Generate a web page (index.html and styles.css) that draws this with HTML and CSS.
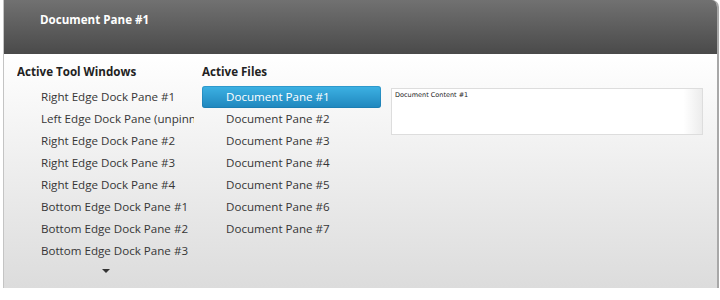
FILE: index.html
```html
<!DOCTYPE html>
<html>
<head>
<meta charset="utf-8">
<link rel="stylesheet" href="styles.css">
</head>
<body>
<div class="window">
  <div class="titlebar"><span class="title">Document Pane #1</span></div>
  <div class="content">
    <div class="col col-tools">
      <div class="heading">Active Tool Windows</div>
      <ul class="list tools">
        <li>Right Edge Dock Pane #1</li>
        <li>Left Edge Dock Pane (unpinned)</li>
        <li>Right Edge Dock Pane #2</li>
        <li>Right Edge Dock Pane #3</li>
        <li>Right Edge Dock Pane #4</li>
        <li>Bottom Edge Dock Pane #1</li>
        <li>Bottom Edge Dock Pane #2</li>
        <li>Bottom Edge Dock Pane #3</li>
      </ul>
      <div class="more"><span class="arrow"></span></div>
    </div>
    <div class="col col-files">
      <div class="heading">Active Files</div>
      <ul class="list files">
        <li class="selected">Document Pane #1</li>
        <li>Document Pane #2</li>
        <li>Document Pane #3</li>
        <li>Document Pane #4</li>
        <li>Document Pane #5</li>
        <li>Document Pane #6</li>
        <li>Document Pane #7</li>
      </ul>
    </div>
    <div class="preview">
      <div class="doc">Document Content #1</div>
    </div>
  </div>
</div>
</body>
</html>
```
FILE: styles.css
```css
html, body {
  margin: 0;
  padding: 0;
  background: #ffffff;
}
body {
  font-family: "Open Sans", "Noto Sans", sans-serif;
  font-size: 11.6px;
  color: #363636;
}
.window {
  margin-left: 3px;
  width: 713px;
  border-left: 1px solid #c4c4c4;
  border-right: 2px solid #a8a8a8;
  border-top-right-radius: 7px;
  overflow: hidden;
}
.titlebar {
  height: 54px;
  background: linear-gradient(#717171, #4a4a4a);
  display: flex;
  align-items: flex-start;
}
.title {
  color: #ffffff;
  font-weight: bold;
  font-size: 11.6px;
  padding: 12px 0 0 36px;
}
.content {
  height: 234px;
  background: linear-gradient(#ffffff, #dcdcdc);
  display: flex;
  padding: 8px 0 0 13px;
  box-sizing: border-box;
}
.col {
  display: flex;
  flex-direction: column;
}
.col-tools {
  width: 177px;
  overflow: hidden;
  margin-right: 8px;
}
.col-files {
  width: 179px;
  margin-right: 10px;
}
.heading {
  font-weight: bold;
  height: 20px;
  line-height: 20px;
  color: #222222;
  white-space: nowrap;
}
.list {
  list-style: none;
  margin: 4px 0 0 0;
  padding: 0;
}
.list li {
  height: 22px;
  line-height: 22px;
  padding-left: 24px;
  white-space: nowrap;
  overflow: hidden;
}
.list li.selected {
  color: #ffffff;
  border-radius: 3px;
  background: linear-gradient(#3db2e4, #1f86bd);
  box-shadow: inset 0 0 0 1px rgba(20, 110, 160, 0.35);
}
.more {
  display: flex;
  justify-content: center;
  padding: 7px 0 0 0;
  width: 177px;
}
.arrow {
  width: 0;
  height: 0;
  border-left: 4px solid transparent;
  border-right: 4px solid transparent;
  border-top: 4px solid #333333;
}
.preview {
  padding-top: 26px;
}
.doc {
  width: 304px;
  height: 41px;
  padding: 2px 3px;
  border: 1px solid #dddddd;
  background: linear-gradient(to right, #ffffff 0, #ffffff 94%, #ececec 100%);
  font-family: "DejaVu Sans", sans-serif;
  font-size: 6.5px;
  color: #222222;
}
```
